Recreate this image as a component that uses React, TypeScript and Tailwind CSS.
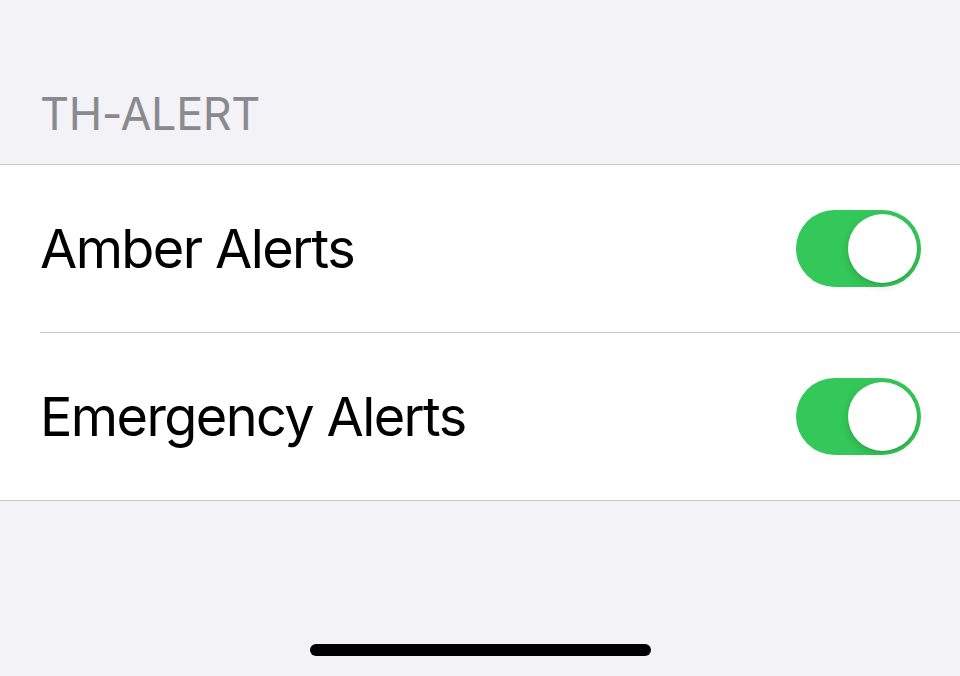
import React from "react";

function Toggle() {
    return (
        <div className="flex h-[77px] w-[125px] items-center justify-end rounded-full bg-[#34c759] px-[4px]">
            <div className="h-[69px] w-[69px] rounded-full bg-white shadow-[0_3px_8px_rgba(0,0,0,0.15),0_1px_1px_rgba(0,0,0,0.1)]" />
        </div>
    );
}

function Row({ label, last }: { label: string; last?: boolean }) {
    return (
        <div className="pl-[40px]">
            <div className={`flex items-center justify-between pr-[39px] ${last ? "h-[167px]" : "h-[168px] border-b border-[#c8c7cc]"}`}>
                <span className="text-[54px] tracking-[-1.6px] text-black">{label}</span>
                <Toggle />
            </div>
        </div>
    );
}

export default function App() {
    return (
        <div
            className="flex h-[676px] w-[960px] flex-col bg-[#f2f2f7]"
            style={{ fontFamily: "Inter, 'Noto Sans', sans-serif" }}
        >
            <div className="flex h-[164px] items-end px-[40px] pb-[28px]">
                <span className="text-[45px] leading-none tracking-[-0.4px] text-[#8a8a8e]">TH-ALERT</span>
            </div>
            <div className="border-y border-[#c8c7cc] bg-white">
                <Row label="Amber Alerts" />
                <Row label="Emergency Alerts" last />
            </div>
            <div className="flex flex-1 items-end justify-center pb-[20px]">
                <div className="h-[12px] w-[341px] rounded-full bg-black" />
            </div>
        </div>
    );
}
